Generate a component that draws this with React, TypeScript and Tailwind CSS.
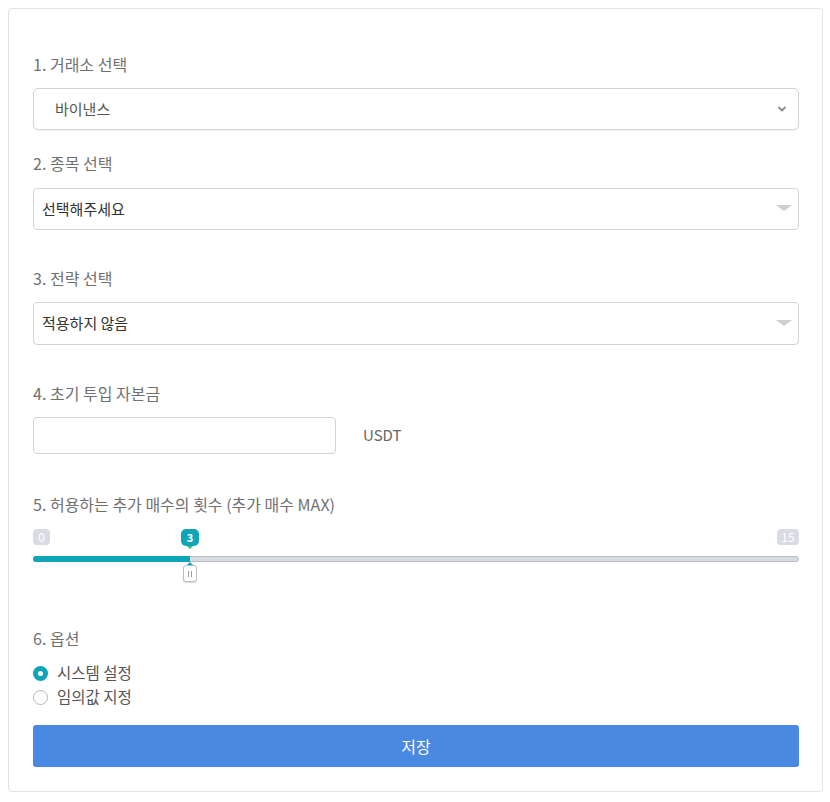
import React, { useState } from 'react';

const font = { fontFamily: '"Noto Sans CJK KR", "Noto Sans", sans-serif' };

function Label({ children, className = '' }: { children: React.ReactNode; className?: string }) {
  return <div className={`h-[22px] leading-[22px] text-[16px] text-[#707070] ${className}`}>{children}</div>;
}

function Caret() {
  return (
    <svg width="16" height="8" viewBox="0 0 16 8" className="absolute right-[6px] top-1/2 -translate-y-1/2">
      <path d="M0 0 L16 0 L8 6 Z" fill="#cfcfcf" />
    </svg>
  );
}

export default function App() {
  const [option, setOption] = useState<'system' | 'custom'>('system');
  const [capital, setCapital] = useState('');
  // slider position of the value 3 (ion range slider keeps a little offset)
  const pos = 157;

  return (
    <div className="py-2 pl-2 pr-[7px] bg-white" style={font}>
      <div className="h-[784px] border border-[#e2e2e2] rounded-[4px] pl-6 pr-[23px] pt-[44px]">
        {/* 1 */}
        <Label>1. 거래소 선택</Label>
        <div className="relative mt-[13px] h-[42px] border border-[#ced4da] rounded-[5px] flex items-center pl-[21px] shadow-[0_1px_1px_rgba(0,0,0,0.05)]">
          <span className="text-[15px] text-[#555]">바이낸스</span>
          <svg width="10" height="8" viewBox="0 0 10 8" className="absolute right-[11px] top-1/2 -translate-y-1/2">
            <path d="M1.5 2 L5 5.5 L8.5 2" stroke="#8a8a8a" strokeWidth="1.8" fill="none" />
          </svg>
        </div>

        {/* 2 */}
        <Label className="mt-[22px]">2. 종목 선택</Label>
        <div className="relative mt-[14px] h-[42px] border border-[#ced4da] rounded-[4px] flex items-center pl-[8px]">
          <span className="text-[15px] text-[#333]">선택해주세요</span>
          <Caret />
        </div>

        {/* 3 */}
        <Label className="mt-[37px]">3. 전략 선택</Label>
        <div className="relative mt-[13px] h-[43px] border border-[#ced4da] rounded-[4px] flex items-center pl-[8px]">
          <span className="text-[15px] text-[#333]">적용하지 않음</span>
          <Caret />
        </div>

        {/* 4 */}
        <Label className="mt-[37px]">4. 초기 투입 자본금</Label>
        <div className="mt-[13px] flex items-center">
          <input
            value={capital}
            onChange={(e) => setCapital(e.target.value)}
            className="w-[303px] h-[37px] border border-[#ced4da] rounded-[4px] px-2 text-[15px] outline-none"
          />
          <span className="ml-[27px] text-[15px] text-[#666]">USDT</span>
        </div>

        {/* 5 */}
        <Label className="mt-[39px]">5. 허용하는 추가 매수의 횟수 (추가 매수 MAX)</Label>
        <div className="relative mt-[14px] h-[59px]">
          <span className="absolute left-0 top-0 h-[16px] w-[17px] text-center rounded-[4px] bg-[#d8dbe3] text-white text-[12px] leading-[16px]">0</span>
          <span className="absolute right-0 top-0 h-[16px] w-[22px] text-center rounded-[4px] bg-[#d8dbe3] text-white text-[12px] leading-[16px]">15</span>
          <div className="absolute top-0 -translate-x-1/2 flex flex-col items-center" style={{ left: pos }}>
            <span className="block h-[17px] w-[18px] text-center rounded-[5px] bg-[#0ea5b8] text-white text-[11px] font-semibold leading-[17px]">3</span>
            <span className="block w-0 h-0 border-l-[3px] border-r-[3px] border-t-[3px] border-l-transparent border-r-transparent border-t-[#2fc06a]" />
          </div>
          <div className="absolute left-0 right-0 top-[27px] h-[6px] rounded-full bg-[#d9dce3] border border-[#b8bcc6]" />
          <div className="absolute left-0 top-[27px] h-[6px] rounded-l-full bg-[#0ea5b8]" style={{ width: pos }} />
          <div className="absolute top-[33px] -translate-x-1/2 flex flex-col items-center" style={{ left: pos }}>
            <span className="block w-0 h-0 border-l-[4px] border-r-[4px] border-b-[4px] border-l-transparent border-r-transparent border-b-[#0ea5b8]" />
            <span className="-mt-[1px] w-[14px] h-[17px] rounded-[3px] bg-white border border-[#b8bcc6] shadow-[0_1px_1px_rgba(0,0,0,0.15)] flex items-center justify-center gap-[2px]">
              <span className="w-px h-[6px] bg-[#9aa0aa]" />
              <span className="w-px h-[6px] bg-[#9aa0aa]" />
            </span>
          </div>
        </div>

        {/* 6 */}
        <Label className="mt-[39px]">6. 옵션</Label>
        <div className="mt-[12px] flex flex-col">
          {[
            { key: 'system' as const, label: '시스템 설정' },
            { key: 'custom' as const, label: '임의값 지정' },
          ].map((o) => (
            <label key={o.key} className="h-[24px] flex items-center gap-[9px] cursor-pointer" onClick={() => setOption(o.key)}>
              {option === o.key ? (
                <span className="w-[15px] h-[15px] rounded-full bg-[#0ea5b8] flex items-center justify-center">
                  <span className="w-[5px] h-[5px] rounded-full bg-white" />
                </span>
              ) : (
                <span className="w-[15px] h-[15px] rounded-full border border-[#b5b8bf] bg-white" />
              )}
              <span className="text-[15.5px] text-[#555]">{o.label}</span>
            </label>
          ))}
        </div>

        <button className="mt-[16px] w-full h-[42px] rounded-[3px] bg-[#4a89e2] text-white text-[16px]">저장</button>
      </div>
    </div>
  );
}
